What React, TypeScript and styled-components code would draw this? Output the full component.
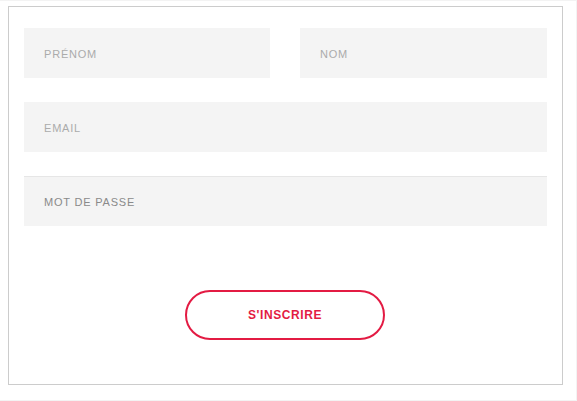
import React from "react";
import styled, { createGlobalStyle } from "styled-components";

const GlobalStyle = createGlobalStyle`
  html, body {
    margin: 0;
    padding: 0;
    background: #ffffff;
  }
  * {
    box-sizing: border-box;
  }
`;

const Page = styled.div`
  width: 577px;
  height: 401px;
  padding: 5px 0 0 8px;
  border: 1px solid #f3f3f3;
  border-left: none;
`;

const Form = styled.form`
  width: 555px;
  height: 379px;
  border: 1px solid #cccccc;
  padding: 21px 15px 0 15px;
  display: flex;
  flex-direction: column;
`;

const Fields = styled.div`
  display: grid;
  grid-template-columns: 246px 1fr;
  column-gap: 30px;
  row-gap: 24px;
`;

const Field = styled.input<{ $wide?: boolean; $dark?: boolean }>`
  grid-column: ${(p) => (p.$wide ? "1 / span 2" : "auto")};
  height: 50px;
  width: 100%;
  border: none;
  border-top: 1px solid ${(p) => (p.$dark ? "#e6e6e6" : "#f4f4f4")};
  background: #f4f4f4;
  padding: 0 20px;
  font-family: "Liberation Sans", Arial, sans-serif;
  font-size: 11px;
  letter-spacing: 0.8px;
  text-transform: uppercase;
  color: #555;
  outline: none;

  &::placeholder {
    color: ${(p) => (p.$dark ? "#8a8a8a" : "#ababab")};
    opacity: 1;
  }
`;

const Actions = styled.div`
  display: flex;
  justify-content: center;
  margin-top: 64px;
  padding-right: 1px;
`;

const SubmitButton = styled.button`
  width: 200px;
  height: 50px;
  border: 2px solid #e31b43;
  border-radius: 25px;
  background: #ffffff;
  color: #e31b43;
  font-family: "Liberation Sans", Arial, sans-serif;
  font-weight: 700;
  font-size: 12px;
  letter-spacing: 0.6px;
  cursor: pointer;
`;

const App = () => {
  return (
    <>
      <GlobalStyle />
      <Page>
        <Form onSubmit={(e) => e.preventDefault()}>
          <Fields>
            <Field type="text" placeholder="PRÉNOM" />
            <Field type="text" placeholder="NOM" />
            <Field $wide type="email" placeholder="EMAIL" />
            <Field $wide $dark type="password" placeholder="MOT DE PASSE" />
          </Fields>
          <Actions>
            <SubmitButton type="submit">S'INSCRIRE</SubmitButton>
          </Actions>
        </Form>
      </Page>
    </>
  );
};

export default App;
